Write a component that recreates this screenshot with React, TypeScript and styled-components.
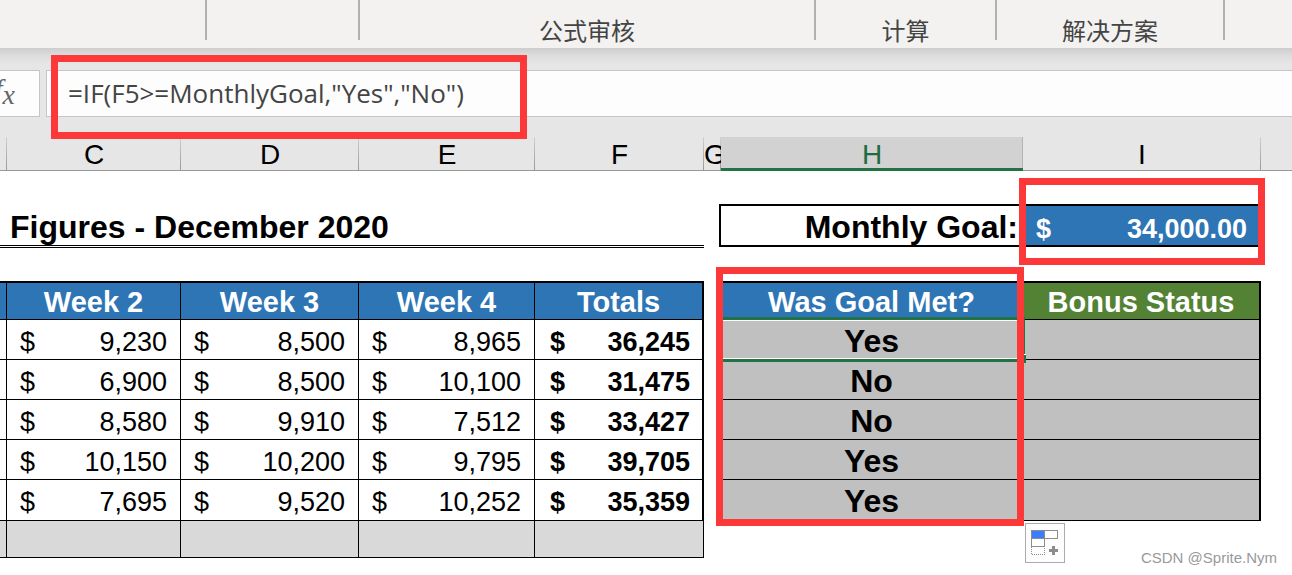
import React from "react";
import styled, { createGlobalStyle, css } from "styled-components";

const GlobalStyle = createGlobalStyle`
  * { box-sizing: border-box; }
  body {
    margin: 0;
    background: #fff;
    color: #000;
    font-family: "Liberation Sans", Arial, "Noto Sans CJK SC", sans-serif;
  }
`;

const Page = styled.main`
  position: relative;
  min-height: 100vh;
`;

const Ribbon = styled.div`
  display: flex;
  height: 48px;
  background: #f3f2f1;
`;

const RibbonGroup = styled.div<{ $width?: number }>`
  display: flex;
  align-items: flex-end;
  justify-content: center;
  flex: ${(p) => (p.$width ? `0 0 ${p.$width}px` : "1 1 0")};
  padding: 0 2px 2px 0;
  font-family: "Noto Sans CJK SC", sans-serif;
  font-size: 24px;
  line-height: 32px;
  color: #444;
  ${(p) =>
    p.$width &&
    css`
      background: linear-gradient(#b3b1af, #b3b1af) right top / 2px 40px no-repeat;
    `}
`;

const FormulaBar = styled.div`
  display: flex;
  gap: 6px;
  padding: 22px 0 20px;
  background: linear-gradient(#cdcdcd, #dcdcdc 7px, #e6e6e6 16px);
`;

const FxButton = styled.button`
  display: flex;
  justify-content: flex-end;
  flex: 0 0 40px;
  height: 47px;
  padding: 2px 24px 0 0;
  overflow: hidden;
  border: 1px solid #c6c6c6;
  border-left: 0;
  background: #fdfdfd;
  color: #666;
  font: italic 28px/32px "Liberation Serif", serif;

  sub {
    font-size: 28px;
    line-height: 32px;
    vertical-align: -6px;
  }
`;

const FormulaField = styled.div`
  position: relative;
  flex: 1;
`;

const FormulaInput = styled.input`
  display: block;
  width: 100%;
  height: 47px;
  padding: 0 21px 2px;
  border: 1px solid #c6c6c6;
  border-right: 0;
  border-radius: 0;
  outline: 0;
  background: #fdfdfd;
  color: #444;
  font: 26px "Open Sans", "Noto Sans CJK SC", sans-serif;
`;

const Highlight = styled.span`
  position: absolute;
  z-index: 2;
  border: 7px solid #fd3838;
  pointer-events: none;
`;

const FormulaHighlight = styled(Highlight)`
  top: -15px;
  left: 5px;
  width: 476px;
  height: 84px;
`;

const GoalHighlight = styled(Highlight)`
  top: -26px;
  right: -4px;
  bottom: -17px;
  left: -4px;
`;

const ResultHighlight = styled(Highlight)`
  top: -16px;
  right: -2px;
  left: -5px;
  height: 259px;
`;

const Sheet = styled.table`
  width: 100%;
  table-layout: fixed;
  border-collapse: separate;
  border-spacing: 0;
  line-height: 32px;
`;

const ColumnHead = styled.th<{ $selected?: boolean }>`
  height: 34px;
  padding: 5px 0 0;
  overflow: hidden;
  vertical-align: top;
  border-bottom: 1px solid #999;
  background: linear-gradient(#d0d0d0, #999) right / 1px 100% no-repeat #e6e6e6;
  font-size: 28px;
  line-height: 26px;
  font-weight: 400;

  &:last-child { background: #e6e6e6; }
  ${(p) =>
    p.$selected &&
    css`
      border-bottom: 3px solid #217346;
      background: linear-gradient(#b4b4b4, #b4b4b4) right / 1px 100% no-repeat #d2d2d2;
      color: #1f6b41;
    `}
`;

const BlankRow = styled.tr`
  height: 33px;

  td { padding: 0; }
`;

const TitleCell = styled.td`
  height: 44px;
  padding: 7px 3px 0;
  vertical-align: top;
  border-bottom: 3px double #000;
  font-size: 32px;
  font-weight: 700;
  white-space: nowrap;
`;

const PlainCell = styled.td`
  position: relative;
  padding: 0;
  vertical-align: top;
`;

const GoalBox = styled.div<{ $kind: "edge" | "label" | "value" }>`
  display: flex;
  height: 43px;
  border: 0 solid #000;
  font-weight: 700;
  ${(p) => p.$kind === "edge" && css`border-right-width: 2px;`}
  ${(p) =>
    p.$kind === "label" &&
    css`
      justify-content: flex-end;
      padding: 5px 5px 0 0;
      border-width: 2px 0;
      font-size: 32px;
    `}
  ${(p) =>
    p.$kind === "value" &&
    css`
      justify-content: space-between;
      padding: 7px 12px 0 13px;
      border-width: 2px 2px 2px 0;
      background: #2e75b6;
      color: #fff;
      font-size: 27px;
    `}
`;

const HeadCell = styled.th<{ $tone?: "green"; $edge?: boolean }>`
  position: relative;
  height: 39px;
  padding: 3px 0 0;
  vertical-align: top;
  border: solid #000;
  border-width: 2px ${(p) => (p.$edge ? 2 : 1)}px 1px 0;
  background: ${(p) => (p.$tone === "green" ? "#548235" : "#2e75b6")};
  color: #fff;
  font-size: 29px;
  font-weight: 700;
  white-space: nowrap;
`;

const MoneyCell = styled.td<{ $total?: boolean; $tall?: boolean }>`
  height: ${(p) => (p.$tall ? 41 : 40)}px;
  padding: ${(p) => (p.$total ? "6px 12px 0 15px" : "6px 13px 0 13px")};
  vertical-align: top;
  border: solid #000;
  border-width: 0 ${(p) => (p.$total ? 2 : 1)}px 1px 0;
  font-size: 27px;
  font-weight: ${(p) => (p.$total ? 700 : 400)};
`;

const Money = styled.div`
  display: flex;
  justify-content: space-between;
`;

const EdgeCell = styled.td`
  padding: 0;
  border: solid #000;
  border-width: 0 1px 1px 0;
`;

const GutterCell = styled.td`
  padding: 0;
  border-right: 2px solid #000;
`;

const ResultCell = styled.td<{ $edge?: boolean }>`
  position: relative;
  padding: 5px 0 0;
  vertical-align: top;
  border: solid #000;
  border-width: 0 ${(p) => (p.$edge ? 2 : 1)}px 1px 0;
  background: #c0c0c0;
  font-size: 32px;
  font-weight: 700;
  text-align: center;
`;

const Selection = styled.span`
  position: absolute;
  z-index: 1;
  top: -3px;
  right: -3px;
  bottom: -3px;
  left: -3px;
  border: 3px solid #217346;
  box-shadow: inset 0 0 0 1px #fff;

  &::after {
    content: "";
    position: absolute;
    right: -4px;
    bottom: -4px;
    width: 8px;
    height: 8px;
    background: #217346;
    box-shadow: 0 -1px #fff;
  }
`;

const FooterCell = styled.td`
  height: 37px;
  padding: 0;
  border: solid #000;
  border-width: 0 1px 1px 0;
  background: #d9d9d9;
`;

const FillOptions = styled.button`
  position: absolute;
  top: 2px;
  left: 2px;
  width: 40px;
  height: 40px;
  padding: 0;
  border: 1px solid #ababab;
  background: #fdfdfd;

  svg { display: block; }
`;

const Watermark = styled.span`
  position: absolute;
  right: 15px;
  bottom: 8px;
  color: #999;
  font-size: 15px;
  line-height: 18px;
`;

const columns = [
  { name: "", width: 7 },
  { name: "C", width: 174 },
  { name: "D", width: 178 },
  { name: "E", width: 176 },
  { name: "F", width: 169 },
  { name: "G", width: 17 },
  { name: "H", width: 302 },
  { name: "I", width: 238 },
  { name: "" },
];

const ribbonGroups = [
  { label: "", width: 207 },
  { label: "", width: 153 },
  { label: "公式审核", width: 456 },
  { label: "计算", width: 181 },
  { label: "解决方案", width: 228 },
  { label: "" },
];

const rows = [
  { weeks: ["9,230", "8,500", "8,965"], total: "36,245", met: "Yes" },
  { weeks: ["6,900", "8,500", "10,100"], total: "31,475", met: "No" },
  { weeks: ["8,580", "9,910", "7,512"], total: "33,427", met: "No" },
  { weeks: ["10,150", "10,200", "9,795"], total: "39,705", met: "Yes" },
  { weeks: ["7,695", "9,520", "10,252"], total: "35,359", met: "Yes" },
];

function Amount({ value }: { value: string }) {
  return (
    <Money>
      <span>$</span>
      <span>{value}</span>
    </Money>
  );
}

function FillIcon() {
  return (
    <svg width="38" height="38" viewBox="0 0 38 38" shapeRendering="crispEdges" aria-hidden="true">
      <path d="M5.500 6.500h26v8h-26zM5.500 14.500h13v8h-13z" fill="#fff" stroke="#8c8c8c" />
      <path d="M6 7h12v7h-12z" fill="#3b7dff" />
      <path d="M18.500 7v7" stroke="#8c8c8c" />
      <path d="M5.500 23v7.500h13v-7.500" fill="none" stroke="#8c8c8c" strokeDasharray="1 1" />
      <path d="M26 22h3v3h3v3h-3v3h-3v-3h-3v-3h3z" fill="#8c8c8c" />
    </svg>
  );
}

export default function App() {
  return (
    <>
      <GlobalStyle />
      <Page>
        <Ribbon>
          {ribbonGroups.map((g, i) => (
            <RibbonGroup key={i} $width={g.width}>{g.label}</RibbonGroup>
          ))}
        </Ribbon>
        <FormulaBar>
          <FxButton aria-label="fx">
            <span>f<sub>x</sub></span>
          </FxButton>
          <FormulaField>
            <FormulaInput aria-label="Formula" defaultValue={'=IF(F5>=MonthlyGoal,"Yes","No")'} />
            <FormulaHighlight />
          </FormulaField>
        </FormulaBar>
        <Sheet>
          <colgroup>
            {columns.map((c, i) => (
              <col key={i} width={c.width} />
            ))}
          </colgroup>
          <thead>
            <tr>
              {columns.map((c, i) => (
                <ColumnHead key={i} $selected={c.name === "H"}>{c.name}</ColumnHead>
              ))}
            </tr>
          </thead>
          <tbody>
            <BlankRow><td colSpan={9} /></BlankRow>
            <tr>
              <TitleCell />
              <TitleCell colSpan={4}>Figures - December 2020</TitleCell>
              <PlainCell><GoalBox $kind="edge" /></PlainCell>
              <PlainCell><GoalBox $kind="label">Monthly Goal:</GoalBox></PlainCell>
              <PlainCell>
                <GoalBox $kind="value">
                  <span>$</span>
                  <span>34,000.00</span>
                </GoalBox>
                <GoalHighlight />
              </PlainCell>
              <PlainCell />
            </tr>
            <BlankRow><td colSpan={9} /></BlankRow>
            <tr>
              <HeadCell as="td" />
              <HeadCell>Week 2</HeadCell>
              <HeadCell>Week 3</HeadCell>
              <HeadCell>Week 4</HeadCell>
              <HeadCell $edge>Totals</HeadCell>
              <GutterCell />
              <HeadCell>
                Was Goal Met?
                <ResultHighlight />
              </HeadCell>
              <HeadCell $tone="green" $edge>Bonus Status</HeadCell>
              <PlainCell />
            </tr>
            {rows.map((row, i) => {
              const last = i === rows.length - 1;
              return (
                <tr key={i}>
                  <EdgeCell />
                  {row.weeks.map((value, w) => (
                    <MoneyCell key={w} $tall={last}><Amount value={value} /></MoneyCell>
                  ))}
                  <MoneyCell $total $tall={last}><Amount value={row.total} /></MoneyCell>
                  <GutterCell />
                  <ResultCell>
                    {row.met}
                    {i === 0 && <Selection />}
                  </ResultCell>
                  <ResultCell $edge />
                  <PlainCell />
                </tr>
              );
            })}
            <tr>
              <FooterCell />
              <FooterCell />
              <FooterCell />
              <FooterCell />
              <FooterCell />
              <PlainCell />
              <PlainCell />
              <PlainCell>
                <FillOptions aria-label="Auto fill options"><FillIcon /></FillOptions>
              </PlainCell>
              <PlainCell />
            </tr>
          </tbody>
        </Sheet>
        <Watermark>CSDN @Sprite.Nym</Watermark>
      </Page>
    </>
  );
}
